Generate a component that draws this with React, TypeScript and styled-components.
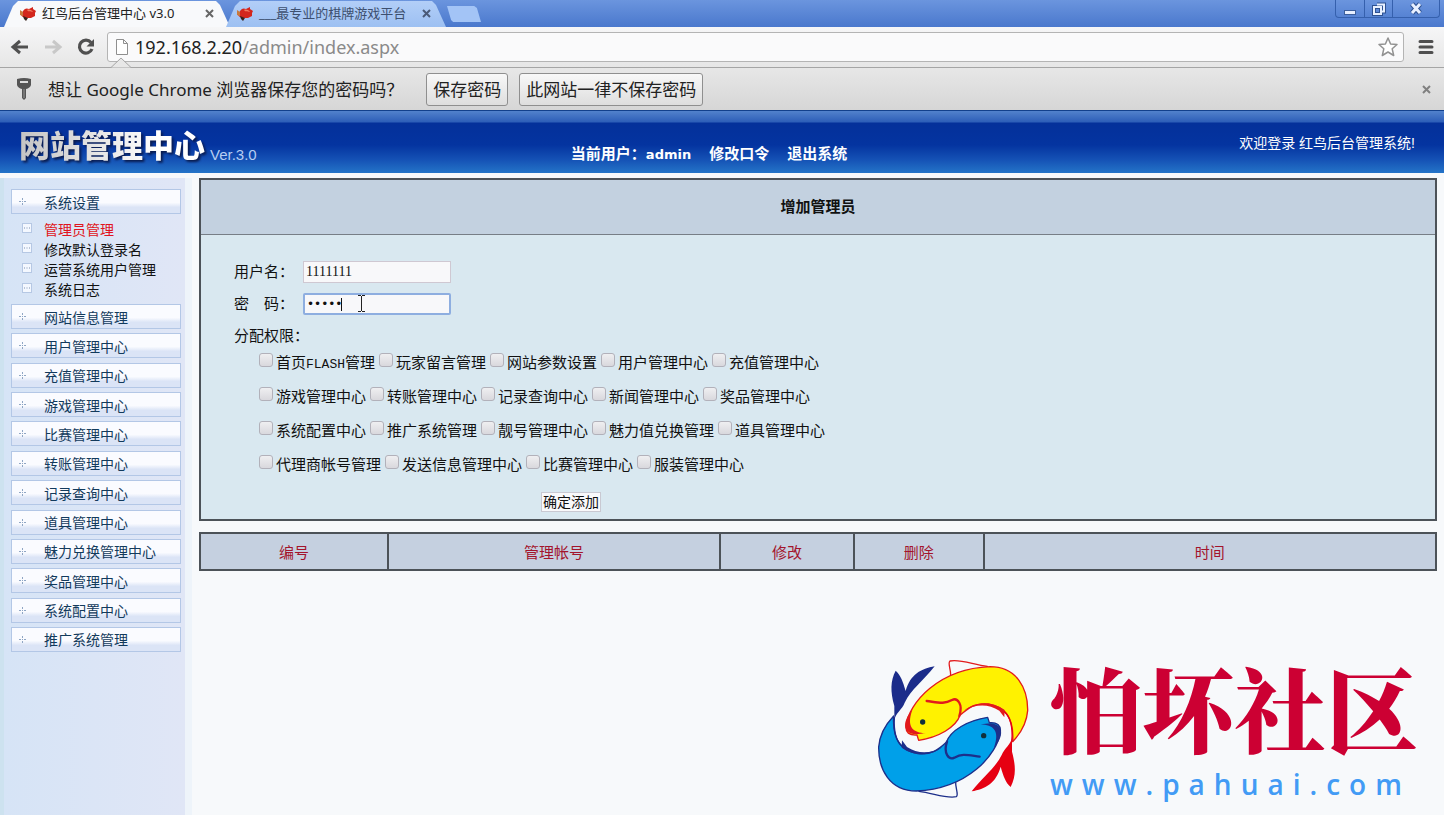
import React from "react";
import styled, { createGlobalStyle, css } from "styled-components";

const GlobalStyle = createGlobalStyle`
  * { box-sizing: border-box; }
  html, body, #root { min-height: 100vh; }
  body {
    margin: 0;
    background: #f7f9fb;
    font-family: "Liberation Sans", "Noto Sans CJK SC", sans-serif;
    font-size: 14px;
    color: #111;
  }
  #root { display: flex; flex-direction: column; }
  button, input { font-family: inherit; }
  a { color: inherit; text-decoration: none; }
`;

/* ---------- Browser window ---------- */

const TitleBar = styled.div`
  display: flex;
  height: 27px;
  padding-left: 4px;
  background: linear-gradient(#6b95de, #4a78cd);
`;

const Tab = styled.div<{ $active?: boolean }>`
  display: flex;
  align-items: center;
  width: ${(p) => (p.$active ? 226 : 220)}px;
  margin-left: ${(p) => (p.$active ? 0 : -4)}px;
  padding: 0 ${(p) => (p.$active ? 16 : 15)}px 0 ${(p) => (p.$active ? 15 : 10)}px;
  background: ${(p) => (p.$active ? "#f8f9fb" : "linear-gradient(#b3cff8, #9dc0f2)")};
  clip-path: polygon(14px 1px, calc(100% - 14px) 1px, calc(100% - 10px) 5px, 100% 100%, 0 100%, 9px 6px);
  color: ${(p) => (p.$active ? "#222" : "#3d4f6e")};
  font: 13px "Noto Sans", "Noto Sans CJK SC", sans-serif;
  white-space: nowrap;
`;

const TabTitle = styled.span`
  flex: 1;
  margin-left: 5px;
  padding-bottom: 2px;
`;

const IconButton = styled.button`
  display: flex;
  align-items: center;
  justify-content: center;
  padding: 0;
  border: 0;
  background: none;
  color: inherit;
`;

const NewTab = styled.button`
  width: 34px;
  height: 16px;
  margin: 6px 0 0 1px;
  padding: 0;
  border: 0;
  background: #a3c4f6;
  clip-path: polygon(0 0, 80% 0, 88% 12%, 100% 100%, 18% 100%, 12% 88%);
`;

const WindowControls = styled.div`
  display: flex;
  height: 18px;
  margin: 0 4px 0 auto;
  border: 1px solid #3560ad;
  border-top: 0;
  border-radius: 0 0 4px 4px;
`;

const WindowButton = styled(IconButton)<{ $wide?: boolean }>`
  width: ${(p) => (p.$wide ? 47 : 28)}px;
  & + & { border-left: 1px solid #3560ad; }
`;

const Toolbar = styled.div`
  position: relative;
  display: flex;
  align-items: center;
  height: 41px;
  padding: 0 10px 0 8px;
  background: linear-gradient(#f6f6f7, #e6e6e6);
  border-bottom: 1px solid #a5a5a5;
`;

const NavButton = styled(IconButton)`
  width: 24px;
  height: 24px;
  margin-right: 9px;
`;

const Address = styled.div`
  display: flex;
  flex: 1;
  align-items: center;
  height: 30px;
  margin-right: 14px;
  padding: 0 4px 0 7px;
  background: #fafafb;
  border: 1px solid #b4b4b4;
  border-radius: 3px;
`;

const Url = styled.div`
  flex: 1;
  margin-left: 6px;
  color: #8a8a8a;
  font: 18px "Noto Sans", sans-serif;
  b { color: #222; font-weight: 400; }
`;

const BubbleArrow = styled.svg`
  position: absolute;
  left: 111px;
  bottom: -1px;
`;

const InfoBar = styled.div`
  display: flex;
  align-items: center;
  height: 42px;
  padding: 0 13px 0 14px;
  background: linear-gradient(#e7e7e7, #d6d6d6);
  color: #222;
  font: 17px "Noto Sans", "Noto Sans CJK SC", sans-serif;
`;

const InfoText = styled.span`
  margin: 0 23px 0 14px;
  padding-bottom: 2px;
`;

const InfoButton = styled.button`
  height: 33px;
  margin-right: 11px;
  padding: 0 6px 2px;
  border: 1px solid #8f8f8f;
  border-radius: 3px;
  background: linear-gradient(#f8f8f8, #dedede);
  color: #222;
  font-size: 17px;
  white-space: nowrap;
`;

const InfoClose = styled(IconButton)`
  margin-left: auto;
`;

/* ---------- Site header ---------- */

const Header = styled.header`
  display: grid;
  grid-template-columns: 39% 1fr auto;
  height: 63px;
  padding-right: 29px;
  border-top: 1px solid #12408c;
  background: linear-gradient(#5282cc 0, #2d5eb8 11px, #04309a 12px, #0434a0 34px, #1450b4 48px, #2474c8 62px);
  color: #fff;
`;

const Brand = styled.div`
  display: flex;
  align-items: center;
  padding-left: 19px;
  white-space: nowrap;
`;

const BrandName = styled.h1`
  margin: 0;
  padding-top: 4px;
  background: linear-gradient(90deg, #c4c4c4, #fff 75%);
  background-clip: text;
  color: transparent;
  filter: drop-shadow(2px 2px 1px #0a1c50);
  font: 900 31px/40px "Noto Sans CJK SC", sans-serif;
`;

const Version = styled.span`
  padding: 24px 0 0 5px;
  color: #b6cdf2;
  font-size: 15px;
`;

const UserNav = styled.nav`
  display: flex;
  align-items: center;
  gap: 18px;
  padding: 20px 0 0 19px;
  font: bold 15px "DejaVu Sans", "Noto Sans CJK SC", sans-serif;
  white-space: nowrap;
  b { font-size: 13px; }
`;

const Welcome = styled.p`
  margin: 0;
  padding-top: 22px;
  line-height: 20px;
`;

/* ---------- Side menu ---------- */

const Body = styled.div`
  display: flex;
  flex: 1;
  align-items: stretch;
  padding-top: 5px;
`;

const Sidebar = styled.aside`
  flex: none;
  width: 185px;
  padding: 11px 4px 0 7px;
  border-left: 4px solid #cde2ef;
  background: linear-gradient(90deg, #d6e4f6, #e0e6f6);
`;

const MenuList = styled.ul`
  display: flex;
  flex-direction: column;
  justify-content: space-between;
  min-height: 348px;
  margin: 0;
  padding: 0;
  list-style: none;
`;

const MenuLink = styled.a`
  display: flex;
  align-items: center;
  gap: 18px;
  width: 170px;
  height: 25px;
  padding-left: 7px;
  border: 1px solid #b3c7e6;
  background: linear-gradient(#fafbff 55%, #dbe4f6 75%);
  color: #123a5c;
  white-space: nowrap;
`;

const SubMenu = styled.ul`
  margin: 0;
  padding: 5px 0 5px 11px;
  list-style: none;
`;

const SubLink = styled.a<{ $current?: boolean }>`
  display: flex;
  align-items: center;
  gap: 11px;
  height: 20px;
  color: ${(p) => (p.$current ? "#e01420" : "#111")};
  white-space: nowrap;
`;

/* ---------- Content ---------- */

const Main = styled.main`
  flex: 1;
  min-width: 0;
  padding: 0 7px 0 7px;
  border-left: 7px solid #eef4fa;
`;

const Panel = styled.section`
  border: 2px solid #4c5258;
  background: #d9e8f0;
`;

const PanelTitle = styled.h2`
  margin: 0;
  border-bottom: 1px solid #777e86;
  background: #c3d1e0;
  font-size: 15px;
  line-height: 54px;
  text-align: center;
`;

const Form = styled.form`
  padding: 21px 33px 7px;
  font-size: 15px;
`;

const Field = styled.div`
  display: flex;
  align-items: center;
  height: 32px;
`;

const FieldLabel = styled.label`
  width: 69px;
  padding-bottom: 3px;
  white-space: pre;
`;

const InputWrap = styled.span`
  position: relative;
  display: flex;
`;

const focused = css`
  border: 2px solid #8eaee0;
  border-radius: 2px;
  outline: none;
`;

const TextInput = styled.input<{ $focused?: boolean }>`
  width: 148px;
  height: 22px;
  padding: 0 2px;
  border: 1px solid #cfc8d2;
  background: #f8f8fa;
  color: #111;
  font: 14px "Liberation Serif", serif;
  &[type="password"] { font: 12px "DejaVu Sans", sans-serif; }
  ${(p) => p.$focused && focused}
`;

const CursorMarks = styled.svg`
  position: absolute;
  left: 36px;
  top: 1px;
  pointer-events: none;
`;

const Legend = styled.div`
  line-height: 32px;
`;

const Permissions = styled.div`
  padding-left: 25px;
`;

const PermissionRow = styled.div`
  display: flex;
  gap: 4px;
  height: 34px;
`;

const Permission = styled.label`
  display: flex;
  align-items: flex-start;
  gap: 3px;
  line-height: 22px;
  white-space: nowrap;
  code { font: 13px "Liberation Mono", monospace; }
`;

const Checkbox = styled.input`
  appearance: none;
  width: 14px;
  height: 14px;
  margin: 1px 0 0;
  border: 1px solid #b2b1ba;
  border-radius: 3px;
  background: linear-gradient(#efeff1, #d9d8dd);
`;

const SubmitRow = styled.div`
  padding: 4px 0 0 307px;
`;

const SubmitButton = styled.button`
  height: 20px;
  padding: 0 1px;
  border: 1px solid #c9c9d2;
  background: #f9f9fb;
  color: #111;
  font-size: 14px;
  line-height: 18px;
`;

const DataTable = styled.table`
  width: 100%;
  margin-top: 11px;
  border-collapse: collapse;
  table-layout: fixed;
  background: #c5d0e0;
`;

const HeadCell = styled.th<{ $width: number }>`
  width: ${(p) => p.$width}%;
  height: 37px;
  padding: 0;
  border: 2px solid #4c5258;
  color: #a3142c;
  font-size: 15px;
  font-weight: 400;
`;

/* ---------- Watermark ---------- */

const Watermark = styled.div`
  position: absolute;
  right: 29px;
  bottom: 0;
  display: flex;
  pointer-events: none;
`;

const WatermarkText = styled.div`
  width: 365px;
  margin-left: -10px;
  padding-top: 16px;
  white-space: nowrap;
`;

const WatermarkName = styled.div`
  color: #cc0033;
  font: 900 92px/100px "Noto Serif CJK SC", "Noto Sans CJK SC", serif;
`;

const WatermarkUrl = styled.div`
  margin-top: 8px;
  color: #429bf5;
  font: 600 28px/40px "Open Sans", sans-serif;
  letter-spacing: 9px;
`;

/* ---------- Icons ---------- */

const BirdIcon = () => (
  <svg width="18" height="16" viewBox="0 0 18 16">
    <path d="M2 9 L4 5 C6 2 8 2 10 3 L14 1 L14 3 L17 5 L16 7 L16 10 L12 12 L8 12 C5 12 3 11 2 9 Z" fill="#d3261c" />
    <path d="M8 4 C10 3 13 4 14 6 C11 5 9 6 8 4 Z" fill="#f07a60" />
    <path d="M1 4 L4 6 L4 10 L1 9 Z" fill="#c9793c" />
    <path d="M4 10 L9 12 L7 15 L5 13 Z" fill="#38221c" />
  </svg>
);

const CloseIcon = ({ color = "#666" }: { color?: string }) => (
  <svg width="9" height="9" viewBox="0 0 9 9">
    <path d="M1 1 L8 8 M8 1 L1 8" stroke={color} strokeWidth="2" />
  </svg>
);

const ArrowIcon = ({ color, flip }: { color: string; flip?: boolean }) => (
  <svg width="20" height="16" viewBox="0 0 20 16">
    <path
      d={flip ? "M2 8 H16 M10 2 L17 8 L10 14" : "M18 8 H4 M10 2 L3 8 L10 14"}
      fill="none" stroke={color} strokeWidth="3"
    />
  </svg>
);

const ReloadIcon = () => (
  <svg width="20" height="20" viewBox="0 0 20 20">
    <path d="M15 5.5 A6.5 6.5 0 1 0 16 12" fill="none" stroke="#505050" strokeWidth="3.2" />
    <path d="M18 2 V9.5 H10.500 Z" fill="#505050" />
  </svg>
);

const PageIcon = () => (
  <svg width="14" height="18" viewBox="0 0 14 18">
    <path d="M1.500 1.500 H8.500 L12.500 5.500 V16.500 H1.500 Z M8.500 1.500 V5.500 H12.500" fill="#fff" stroke="#8f8f8f" />
  </svg>
);

const StarIcon = () => (
  <svg width="22" height="22" viewBox="0 0 22 22">
    <path
      d="M11 2 L13.600 8 L20 8.500 L15.200 12.800 L16.700 19.500 L11 16 L5.300 19.500 L6.800 12.800 L2 8.500 L8.400 8 Z"
      fill="#fff" stroke="#929292" strokeWidth="1.500" strokeLinejoin="round"
    />
  </svg>
);

const MenuIcon = () => (
  <svg width="16" height="16" viewBox="0 0 16 16">
    <path d="M2 2.500 H14 M2 8 H14 M2 13.500 H14" stroke="#4f4f4f" strokeWidth="3" strokeLinecap="round" />
  </svg>
);

const KeyIcon = () => (
  <svg width="20" height="24" viewBox="0 0 20 24">
    <path d="M3 2 Q10 0 17 2 L17 8 Q16 11 12 12 V21 L10 23 L8 21 V12 Q4 11 3 8 Z" fill="#555" />
    <rect x="6" y="4" width="8" height="2" fill="#ddd" />
    <path d="M10 12 V21" stroke="#999" />
  </svg>
);

const PlusMark = () => (
  <svg width="7" height="9" viewBox="0 0 7 9">
    <path d="M3 1 h1 v1 h-1 z M0 4 h2 v1 h-2 z M5 4 h2 v1 h-2 z M3 4 h1 v1 h-1 z M3 7 h1 v1 h-1 z M3 2 h1 v1 h-1 z M3 6 h1 v1 h-1 z" fill="#8fa6c4" />
  </svg>
);

const PageMark = () => (
  <svg width="11" height="14" viewBox="0 0 11 14">
    <rect x="0.5" y="1.500" width="9" height="9" fill="#f4f8ff" stroke="#b6c8e4" />
    <path d="M2 6 h1 M4.500 6 h1 M7 6 h1" stroke="#7e92b2" />
  </svg>
);

const Fish = ({ fill, line, tail }: { fill: string; line: string; tail: string }) => (
  <g strokeLinecap="round" strokeLinejoin="round">
    <path d="M272 106 C273 88 262 68 270 63 C300 56 340 74 382 79" fill="none" stroke={line} strokeWidth="4" />
    <path
      d="M138 258 C146 190 235 86 390 80 C470 80 504 145 503 212 C500 250 482 280 458 305 C462 250 445 202 385 192 C345 188 325 203 300 226 C288 262 235 292 176 301 L171 285 C148 287 136 277 138 258 Z"
      fill={fill} stroke={line} strokeWidth="4"
    />
    <path d="M157 210 C128 242 125 280 168 283 L197 280 C160 278 138 262 157 210 Z" fill={line} />
    <path d="M200 183 C238 188 252 193 276 180 C292 172 310 192 298 228" fill="none" stroke={line} strokeWidth="7" />
    <path d="M312 212 C345 184 395 182 434 210 L433 232 L418 212 C385 190 345 192 312 212 Z" fill={line} />
    <path
      d="M456 290 C455 312 432 325 425 345 C405 385 370 410 335 454 C375 447 408 430 422 380 C430 408 437 428 452 441 C468 410 468 380 456 335 Z"
      fill={tail}
    />
    <path d="M434 215 C452 232 458 262 456 300" fill="none" stroke={tail} strokeWidth="4" />
    <circle cx="188" cy="246" r="8" fill="#10303c" />
  </g>
);

const FishLogo = () => (
  <svg width="200" height="175" viewBox="0 0 600 525">
    <g transform="rotate(180 279.500 266.500)">
      <Fish fill="#00a0e9" line="#1d2f8a" tail="#1b2c8a" />
    </g>
    <Fish fill="#fff200" line="#e21a1c" tail="#e60012" />
  </svg>
);

/* ---------- Data ---------- */

const subItems = ["管理员管理", "修改默认登录名", "运营系统用户管理", "系统日志"];

const menuItems = [
  "网站信息管理", "用户管理中心", "充值管理中心", "游戏管理中心", "比赛管理中心", "转账管理中心",
  "记录查询中心", "道具管理中心", "魅力兑换管理中心", "奖品管理中心", "系统配置中心", "推广系统管理",
];

const permissions: React.ReactNode[][] = [
  [<span>首页<code>FLASH</code>管理</span>, "玩家留言管理", "网站参数设置", "用户管理中心", "充值管理中心"],
  ["游戏管理中心", "转账管理中心", "记录查询中心", "新闻管理中心", "奖品管理中心"],
  ["系统配置中心", "推广系统管理", "靓号管理中心", "魅力值兑换管理", "道具管理中心"],
  ["代理商帐号管理", "发送信息管理中心", "比赛管理中心", "服装管理中心"],
];

const columns = [
  { name: "编号", width: 15.2 },
  { name: "管理帐号", width: 26.9 },
  { name: "修改", width: 10.8 },
  { name: "删除", width: 10.5 },
  { name: "时间", width: 36.6 },
];

export default function App() {
  return (
    <>
      <GlobalStyle />
      <TitleBar>
        <Tab $active>
          <BirdIcon />
          <TabTitle>红鸟后台管理中心 v3.0</TabTitle>
          <IconButton aria-label="关闭标签页"><CloseIcon /></IconButton>
        </Tab>
        <Tab>
          <BirdIcon />
          <TabTitle>___最专业的棋牌游戏平台</TabTitle>
          <IconButton aria-label="关闭标签页"><CloseIcon color="#4a5a78" /></IconButton>
        </Tab>
        <NewTab aria-label="新标签页" />
        <WindowControls>
          <WindowButton aria-label="最小化">
            <svg width="12" height="12"><rect x="0.5" y="7.500" width="11" height="4" fill="#e8f0ff" stroke="#3c5f9c" /></svg>
          </WindowButton>
          <WindowButton aria-label="还原">
            <svg width="14" height="14" fill="none">
              <path d="M5 2.500 H12 V9.500 H10 M2 5 H9 V12 H2 Z" stroke="#2f5292" strokeWidth="4" />
              <path d="M5 2.500 H12 V9.500 H10 M2 5 H9 V12 H2 Z" stroke="#e8f0ff" strokeWidth="2" />
            </svg>
          </WindowButton>
          <WindowButton $wide aria-label="关闭">
            <svg width="14" height="13" fill="none">
              <path d="M3 2 L11 11 M11 2 L3 11" stroke="#2f5292" strokeWidth="5" />
              <path d="M3 2 L11 11 M11 2 L3 11" stroke="#e8f0ff" strokeWidth="3" />
            </svg>
          </WindowButton>
        </WindowControls>
      </TitleBar>

      <Toolbar>
        <NavButton aria-label="后退"><ArrowIcon color="#505050" /></NavButton>
        <NavButton aria-label="前进"><ArrowIcon color="#c8c8c8" flip /></NavButton>
        <NavButton aria-label="重新加载"><ReloadIcon /></NavButton>
        <Address>
          <PageIcon />
          <Url><b>192.168.2.20</b>/admin/index.aspx</Url>
          <IconButton aria-label="加入书签"><StarIcon /></IconButton>
        </Address>
        <IconButton aria-label="菜单"><MenuIcon /></IconButton>
        <BubbleArrow width="20" height="11" viewBox="0 0 20 11">
          <path d="M0 10.500 L10 1 L20 10.500" fill="#e7e7e7" stroke="#a5a5a5" />
        </BubbleArrow>
      </Toolbar>

      <InfoBar>
        <KeyIcon />
        <InfoText>想让 Google Chrome 浏览器保存您的密码吗？</InfoText>
        <InfoButton>保存密码</InfoButton>
        <InfoButton>此网站一律不保存密码</InfoButton>
        <InfoClose aria-label="关闭提示"><CloseIcon color="#808080" /></InfoClose>
      </InfoBar>

      <Header>
        <Brand>
          <BrandName>网站管理中心</BrandName>
          <Version>Ver.3.0</Version>
        </Brand>
        <UserNav>
          <span>当前用户：<b>admin</b></span>
          <a href="#password">修改口令</a>
          <a href="#logout">退出系统</a>
        </UserNav>
        <Welcome>欢迎登录 红鸟后台管理系统!</Welcome>
      </Header>

      <Body>
        <Sidebar>
          <MenuLink href="#settings"><PlusMark />系统设置</MenuLink>
          <SubMenu>
            {subItems.map((item, i) => (
              <li key={item}><SubLink href="#sub" $current={i === 0}><PageMark />{item}</SubLink></li>
            ))}
          </SubMenu>
          <MenuList>
            {menuItems.map((item) => (
              <li key={item}><MenuLink href="#menu"><PlusMark />{item}</MenuLink></li>
            ))}
          </MenuList>
        </Sidebar>

        <Main>
          <Panel>
            <PanelTitle>增加管理员</PanelTitle>
            <Form>
              <Field>
                <FieldLabel htmlFor="user">用户名：</FieldLabel>
                <TextInput id="user" defaultValue="1111111" />
              </Field>
              <Field>
                <FieldLabel htmlFor="pass">密　码：</FieldLabel>
                <InputWrap>
                  <TextInput id="pass" type="password" defaultValue="11111" $focused />
                  <CursorMarks width="28" height="20" viewBox="0 0 28 20">
                    <path d="M2.500 4 V17" stroke="#111" />
                    <path d="M19 1.500 H22 M23 1.500 H26 M22.500 2 V17 M19 17.500 H22 M23 17.500 H26" stroke="#222" />
                  </CursorMarks>
                </InputWrap>
              </Field>
              <Legend>分配权限：</Legend>
              <Permissions>
                {permissions.map((row, r) => (
                  <PermissionRow key={r}>
                    {row.map((name, i) => (
                      <Permission key={i}><Checkbox type="checkbox" />{name}</Permission>
                    ))}
                  </PermissionRow>
                ))}
              </Permissions>
              <SubmitRow><SubmitButton type="button">确定添加</SubmitButton></SubmitRow>
            </Form>
          </Panel>

          <DataTable>
            <thead>
              <tr>
                {columns.map((c) => <HeadCell key={c.name} $width={c.width}>{c.name}</HeadCell>)}
              </tr>
            </thead>
          </DataTable>
        </Main>
      </Body>

      <Watermark>
        <FishLogo />
        <WatermarkText>
          <WatermarkName>怕坏社区</WatermarkName>
          <WatermarkUrl>www.pahuai.com</WatermarkUrl>
        </WatermarkText>
      </Watermark>
    </>
  );
}
